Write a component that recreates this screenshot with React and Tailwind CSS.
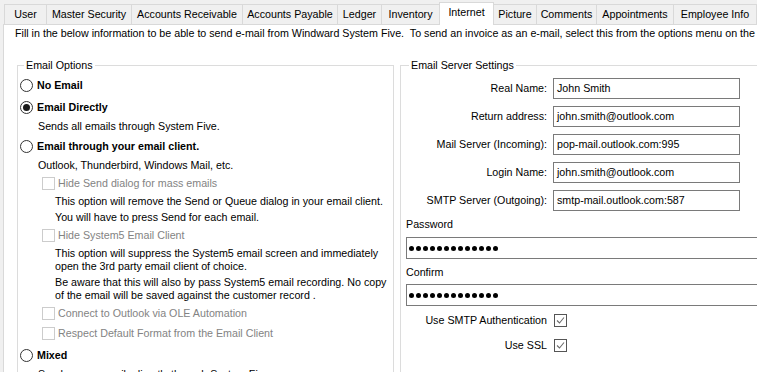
import React from "react";

const tabs = [
  { label: "User", w: "w-[43px]" },
  { label: "Master Security", w: "w-[86px]" },
  { label: "Accounts Receivable", w: "w-[112px]" },
  { label: "Accounts Payable", w: "w-[96px]" },
  { label: "Ledger", w: "w-[45px]" },
  { label: "Inventory", w: "w-[59px]" },
  { label: "Internet", w: "w-[55px]", active: true },
  { label: "Picture", w: "w-[44px]" },
  { label: "Comments", w: "w-[61px]" },
  { label: "Appointments", w: "w-[78px]" },
  { label: "Employee Info", w: "w-[84px]" }
];

const Radio = ({ checked, label }) => (
  <div className="flex items-center h-[13px] leading-[13px]">
    <span className="w-[13px] h-[13px] rounded-full border border-[#333] bg-white flex items-center justify-center shrink-0">
      {checked && <span className="w-[7px] h-[7px] rounded-full bg-[#1a1a1a]" />}
    </span>
    <span className="ml-[4px] font-bold">{label}</span>
  </div>
);

const DisabledCheck = ({ label }) => (
  <div className="flex items-center h-[13px] leading-[13px] pl-[22px] text-[#838383]">
    <span className="w-[13px] h-[13px] border border-[#cccccc] bg-white shrink-0" />
    <span className="ml-[3px]">{label}</span>
  </div>
);

const Line = ({ children, className = "" }) => (
  <div className={"h-[13px] leading-[13px] whitespace-nowrap " + className}>{children}</div>
);

const Field = ({ label, value, className = "" }) => (
  <div className={"flex items-center " + className}>
    <div className="w-[147px] text-right pr-[1px]">{label}</div>
    <div className="ml-[5px] w-[187px] h-[21px] border border-[#7a7a7a] bg-white pl-[3px] flex items-center">
      {value}
    </div>
  </div>
);

const Dots = () => (
  <div className="flex gap-[2px] pl-[2px]">
    {Array.from({ length: 13 }).map((_, i) => (
      <span key={i} className="w-[5px] h-[5px] rounded-full bg-black" />
    ))}
  </div>
);

const Check = ({ label, className = "" }) => (
  <div className={"flex items-center h-[13px] leading-[13px] " + className}>
    <div className="w-[147px] text-right pr-[1px]">{label}</div>
    <span className="ml-[6px] w-[13px] h-[13px] border border-[#555] bg-white flex items-center justify-center">
      <svg width="9" height="9" viewBox="0 0 9 9">
        <path d="M1 4.5 L3.5 7 L8 1.5" fill="none" stroke="#6b6b6b" strokeWidth="1.1" />
      </svg>
    </span>
  </div>
);

const App = () => {
  return (
    <div
      className="w-[757px] h-[372px] overflow-hidden bg-[#f0f0f0] text-[10.7px] text-black flex flex-col"
      style={{ fontFamily: "'Liberation Sans', Arial, sans-serif" }}
    >
      {/* Tabs */}
      <div className="flex items-end h-[24px] pl-[5px] shrink-0">
        {tabs.map(t =>
          t.active ? (
            <div
              key={t.label}
              className={t.w + " h-[23px] -mb-px -ml-px bg-white border border-b-0 border-[#d9d9d9] flex items-start justify-center pt-[3px] z-10 leading-[13px] shrink-0"}
            >
              {t.label}
            </div>
          ) : (
            <div
              key={t.label}
              className={t.w + " h-[20px] -ml-px bg-[#f0f0f0] border border-b-0 border-[#d9d9d9] flex items-center justify-center whitespace-nowrap shrink-0"}
            >
              {t.label}
            </div>
          )
        )}
      </div>

      {/* Page */}
      <div className="ml-[3px] flex-1 bg-white border-l border-t border-[#d9d9d9] pl-[11px] pt-[2px]">
        <Line>
          Fill in the below information to be able to send e-mail from Windward System Five.&nbsp; To send an invoice as an e-mail, select this from the options menu on the invoice screen.
        </Line>

        <div className="flex gap-[6px] mt-[25px] ml-[2px]">
          {/* Email Options */}
          <div className="relative w-[377px] h-[400px] border border-[#dcdcdc] pl-[2px] pt-[13px] shrink-0">
            <span className="absolute -top-[7px] left-[6px] px-[2px] bg-white leading-[13px]">Email Options</span>
            <Radio label="No Email" />
            <div className="mt-[9px]"><Radio checked label="Email Directly" /></div>
            <Line className="mt-[6px] pl-[18px]">Sends all emails through System Five.</Line>
            <div className="mt-[7px]"><Radio label="Email through your email client." /></div>
            <Line className="mt-[6px] pl-[18px]">Outlook, Thunderbird, Windows Mail, etc.</Line>
            <div className="mt-[5px]"><DisabledCheck label="Hide Send dialog for mass emails" /></div>
            <Line className="mt-[5px] pl-[35px]">This option will remove the Send or Queue dialog in your email client.</Line>
            <Line className="mt-[3px] pl-[35px]">You will have to press Send for each email.</Line>
            <div className="mt-[5px]"><DisabledCheck label="Hide System5 Email Client" /></div>
            <Line className="mt-[5px] pl-[35px]">This option will suppress the System5 email screen and immediately</Line>
            <Line className="pl-[35px]">open the 3rd party email client of choice.</Line>
            <Line className="mt-[3px] pl-[35px]">Be aware that this will also by pass System5 email recording. No copy</Line>
            <Line className="pl-[35px]">of the email will be saved against the customer record .</Line>
            <div className="mt-[5px]"><DisabledCheck label="Connect to Outlook via OLE Automation" /></div>
            <div className="mt-[7px]"><DisabledCheck label="Respect Default Format from the Email Client" /></div>
            <div className="mt-[9px]"><Radio label="Mixed" /></div>
            <Line className="mt-[6px] pl-[18px]">Sends some emails directly through System Five.</Line>
          </div>

          {/* Email Server Settings */}
          <div className="relative w-[400px] h-[400px] border border-[#dcdcdc] pt-[12px] shrink-0">
            <span className="absolute -top-[7px] left-[8px] px-[2px] bg-white leading-[13px]">Email Server Settings</span>
            <Field label="Real Name:" value="John Smith" />
            <Field className="mt-[7px]" label="Return address:" value="john.smith@outlook.com" />
            <Field className="mt-[7px]" label="Mail Server (Incoming):" value="pop-mail.outlook.com:995" />
            <Field className="mt-[7px]" label="Login Name:" value="john.smith@outlook.com" />
            <Field className="mt-[7px]" label="SMTP Server (Outgoing):" value="smtp-mail.outlook.com:587" />
            <Line className="mt-[7px] pl-[5px]">Password</Line>
            <div className="mt-[6px] ml-[5px] h-[22px] border border-[#7a7a7a] bg-white flex items-center">
              <Dots />
            </div>
            <Line className="mt-[7px] pl-[5px]">Confirm</Line>
            <div className="mt-[5px] ml-[5px] h-[22px] border border-[#7a7a7a] bg-white flex items-center">
              <Dots />
            </div>
            <Check className="mt-[8px]" label="Use SMTP Authentication" />
            <Check className="mt-[12px]" label="Use SSL" />
          </div>
        </div>
      </div>
    </div>
  );
};

export default App;
